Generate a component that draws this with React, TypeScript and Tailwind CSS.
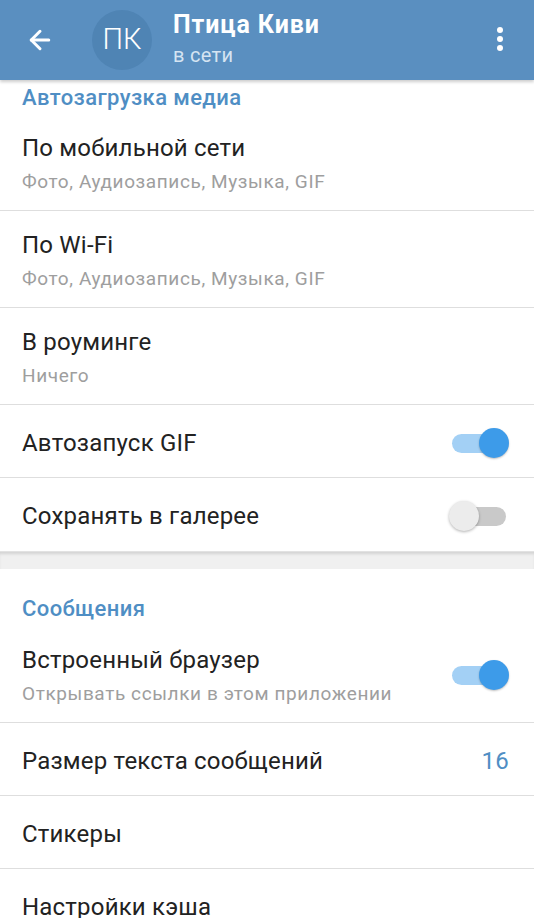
import { ArrowLeft } from 'lucide-react';

const Toggle = ({ on }: { on: boolean }) => (
    <div className="relative w-[60px] h-[32px] shrink-0">
        <div
            className={`absolute left-[3px] right-[3px] top-[7px] h-[19px] rounded-full ${on ? 'bg-[#a3d0f5]' : 'bg-[#c9c9c9]'}`}
        />
        <div
            className={`absolute top-[1px] w-[30px] h-[30px] rounded-full ${
                on ? 'right-0 bg-[#3d9be9] shadow-[0_1px_2px_rgba(0,0,0,0.25)]' : 'left-0 bg-[#ececec] shadow-[0_1px_3px_rgba(0,0,0,0.3)]'
            }`}
        />
    </div>
);

const Row = ({
    title,
    subtitle,
    toggle,
    value,
    last,
}: {
    title: string;
    subtitle?: string;
    toggle?: boolean;
    value?: string;
    last?: boolean;
}) => (
    <div
        className={`flex items-center justify-between pl-[22px] pr-[25px] ${subtitle ? 'h-[97px] pt-[2px]' : 'h-[73px] pt-[3px]'} ${
            last ? '' : 'border-b border-[#dedede]'
        }`}
    >
        <div className="flex flex-col">
            <span className="text-[24px] tracking-[0.2px] leading-none text-[#222]">{title}</span>
            {subtitle && (
                <span className="mt-[12px] text-[19px] tracking-[0.6px] leading-none text-[#9e9e9e]">{subtitle}</span>
            )}
        </div>
        {toggle !== undefined && <Toggle on={toggle} />}
        {value && <span className="text-[24px] tracking-[0.2px] leading-none text-[#4f8ec4]">{value}</span>}
    </div>
);

export default function App() {
    return (
        <div className="w-[534px] h-[918px] overflow-hidden bg-white font-['Roboto',sans-serif]">
            <header className="relative z-10 h-[80px] bg-[#5a8fc0] flex items-center shadow-[0_2px_3px_rgba(0,0,0,0.2)]">
                <div className="w-[92px] flex justify-center pl-[2px] pr-[14px]">
                    <ArrowLeft className="w-[30px] h-[30px] text-white" strokeWidth={2.4} />
                </div>
                <div className="w-[60px] h-[60px] rounded-full bg-[#4f84b4] flex items-center justify-center text-white text-[29px] font-light">
                    ПК
                </div>
                <div className="flex flex-col ml-[21px] flex-1 mb-[3px]">
                    <span className="text-white text-[25px] tracking-[0.9px] font-bold leading-none">Птица Киви</span>
                    <span className="text-[#d5e4f2] text-[20px] tracking-[0.3px] leading-none mt-[8px]">в сети</span>
                </div>
                <div className="w-[70px] flex flex-col items-center gap-[3px] pl-[2px] mb-[2px]">
                    <div className="w-[6px] h-[6px] rounded-full bg-white" />
                    <div className="w-[6px] h-[6px] rounded-full bg-white" />
                    <div className="w-[6px] h-[6px] rounded-full bg-white" />
                </div>
            </header>

            <div className="h-[34px] flex items-start pl-[22px] pt-[7px]">
                <span className="text-[22px] tracking-[0.4px] font-medium leading-none text-[#4f8ec4]">Автозагрузка медиа</span>
            </div>
            <Row title="По мобильной сети" subtitle="Фото, Аудиозапись, Музыка, GIF" />
            <Row title="По Wi-Fi" subtitle="Фото, Аудиозапись, Музыка, GIF" />
            <Row title="В роуминге" subtitle="Ничего" />
            <Row title="Автозапуск GIF" toggle={true} />
            <Row title="Сохранять в галерее" toggle={false} last />

            <div className="h-[18px] bg-[#f0f0f0] border-t border-[#e2e2e2] shadow-[inset_0_3px_3px_-1px_rgba(0,0,0,0.12)]" />

            <div className="h-[57px] flex items-start pl-[22px] pt-[29px]">
                <span className="text-[22px] tracking-[0.4px] font-medium leading-none text-[#4f8ec4]">Сообщения</span>
            </div>
            <Row title="Встроенный браузер" subtitle="Открывать ссылки в этом приложении" toggle={true} />
            <Row title="Размер текста сообщений" value="16" />
            <Row title="Стикеры" />
            <Row title="Настройки кэша" />
        </div>
    );
}
